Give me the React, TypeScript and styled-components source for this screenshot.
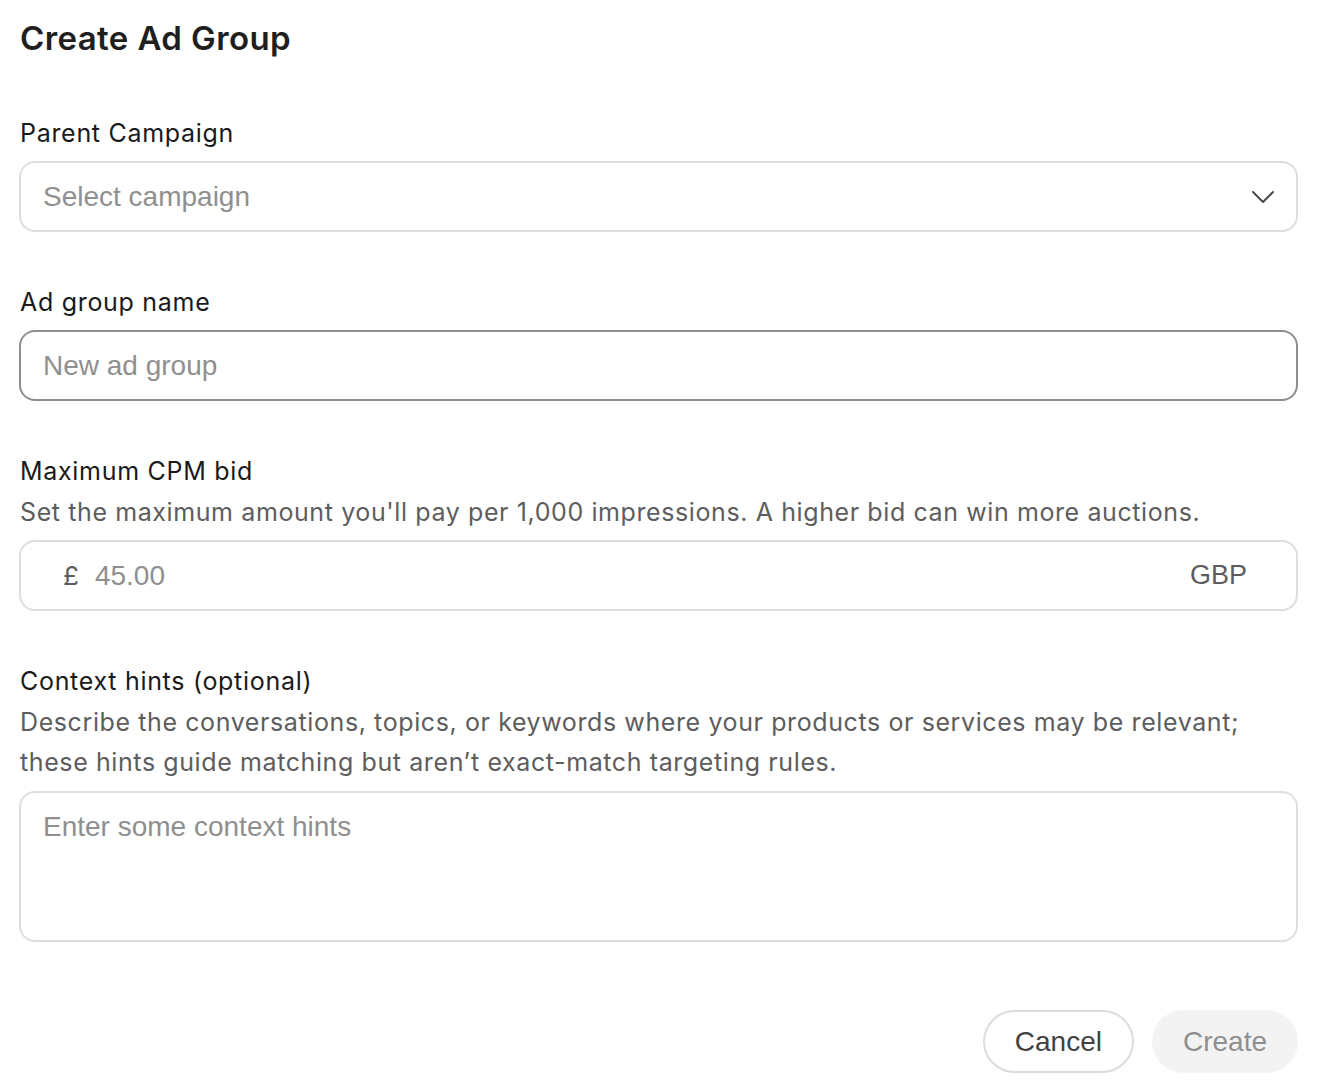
import React from 'react';
import styled, {createGlobalStyle} from 'styled-components';

const GlobalStyle = createGlobalStyle`
  body {
    margin: 0;
    background: #fff;
    font-family: Inter, "Noto Sans", sans-serif;
    color: #1a1a1a;
  }
`

const Page = styled.div`
  padding: 18px 20px 16px 19px;
  display: flex;
  flex-direction: column;
`

const Title = styled.h1`
  margin: 0 0 59px 1px;
  font-size: 33px;
  line-height: 40px;
  font-weight: 600;
  letter-spacing: 0.4px;
  color: #1f1f1f;
`

const Field = styled.div`
  display: flex;
  flex-direction: column;
  margin-bottom: 54px;
`

const Label = styled.label`
  margin-left: 1px;
  font-size: 25px;
  line-height: 32px;
  font-weight: 400;
  letter-spacing: 0.7px;
  color: #1a1a1a;
`

const Hint = styled.p`
  margin: 5px 0 0 1px;
  font-size: 25px;
  line-height: 40px;
  letter-spacing: 0.6px;
  color: #5d5d5d;
`

const Box = styled.div<{$focused?: boolean; $tall?: boolean; $gap?: number}>`
  margin-top: ${p => p.$gap ?? 12}px;
  height: ${p => (p.$tall ? 151 : 71)}px;
  box-sizing: border-box;
  border: ${p => (p.$focused ? '2px solid #8e8e8e' : '2px solid #dedede')};
  border-radius: 16px;
  display: flex;
  align-items: ${p => (p.$tall ? 'flex-start' : 'center')};
  padding: ${p => (p.$tall ? '18px 22px' : '0 22px')};
  font-family: "Liberation Sans", Arial, sans-serif;
  font-size: 28px;
`

const Placeholder = styled.span`
  flex: 1;
  color: #8f8f8f;
`

const Currency = styled.span`
  font-family: Inter, "Noto Sans", sans-serif;
  font-size: 26px;
  color: #5d5d5d;
  margin-left: 20px;
  margin-right: 16px;
`

const Suffix = styled.span`
  font-size: 27px;
  color: #5d5d5d;
  margin-right: 27px;
`

const Actions = styled.div`
  display: flex;
  justify-content: flex-end;
  gap: 18px;
  margin-top: 14px;
`

const Button = styled.button<{$primary?: boolean}>`
  height: 63px;
  padding: ${p => (p.$primary ? '0 29px' : '0 30px')};
  border-radius: 32px;
  font-family: "Liberation Sans", Arial, sans-serif;
  font-size: 28px;
  border: ${p => (p.$primary ? '2px solid transparent' : '2px solid #dcdcdc')};
  background: ${p => (p.$primary ? '#f3f3f3' : '#fff')};
  color: ${p => (p.$primary ? '#8f8f8f' : '#424242')};
`

const ChevronIcon = styled.svg`
  margin-right: -1px;
`

const Chevron = () => (
  <ChevronIcon width="24" height="14" viewBox="0 0 24 14" fill="none" stroke="#4a4a4a" strokeWidth="2" strokeLinecap="round" strokeLinejoin="round">
    <path d="M2 2l10 10 10-10" />
  </ChevronIcon>
)

const App = () => {
  return (
    <Page>
      <GlobalStyle />
      <Title>Create Ad Group</Title>

      <Field>
        <Label>Parent Campaign</Label>
        <Box>
          <Placeholder>Select campaign</Placeholder>
          <Chevron />
        </Box>
      </Field>

      <Field>
        <Label>Ad group name</Label>
        <Box $focused>
          <Placeholder>New ad group</Placeholder>
        </Box>
      </Field>

      <Field>
        <Label>Maximum CPM bid</Label>
        <Hint>Set the maximum amount you'll pay per 1,000 impressions. A higher bid can win more auctions.</Hint>
        <Box $gap={8}>
          <Currency>£</Currency>
          <Placeholder>45.00</Placeholder>
          <Suffix>GBP</Suffix>
        </Box>
      </Field>

      <Field>
        <Label>Context hints (optional)</Label>
        <Hint>
          Describe the conversations, topics, or keywords where your products or services may be relevant;
          <br />
          these hints guide matching but aren’t exact-match targeting rules.
        </Hint>
        <Box $tall $gap={9}>
          <Placeholder>Enter some context hints</Placeholder>
        </Box>
      </Field>

      <Actions>
        <Button>Cancel</Button>
        <Button $primary>Create</Button>
      </Actions>
    </Page>
  )
}

export default App;
